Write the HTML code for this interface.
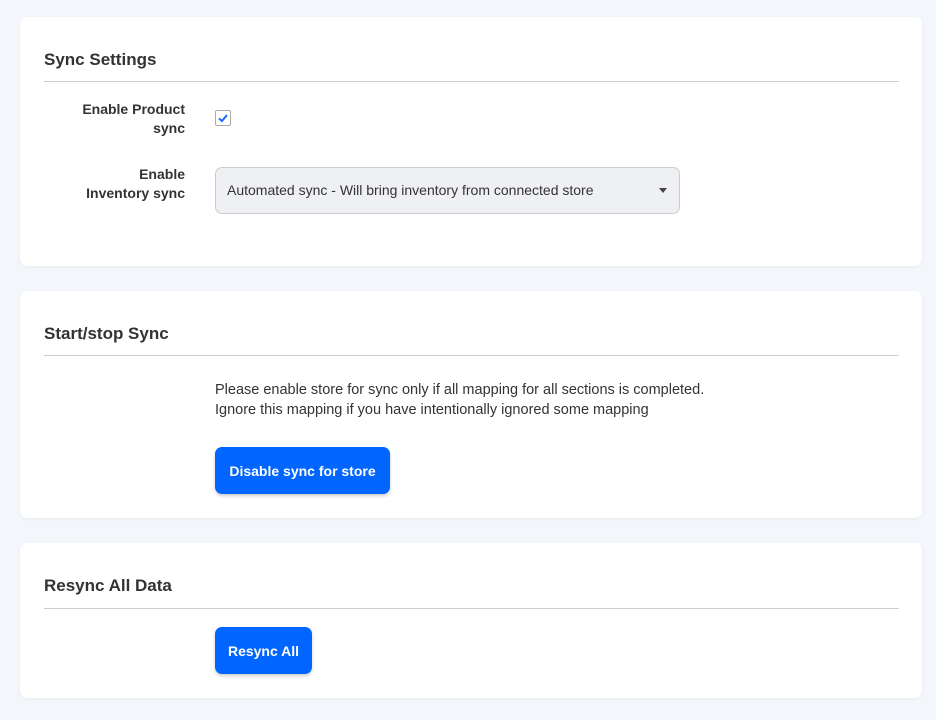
<!DOCTYPE html>
<html><head><style>
body{margin:0;background:#f3f6fa;font-family:"Liberation Sans",sans-serif;color:#333;width:936px;height:720px;overflow:hidden;position:relative}
.card{position:absolute;left:20px;width:902px;background:#fff;border-radius:7px;box-shadow:0 1px 3px rgba(0,0,0,.05)}
.t{position:absolute;left:24px;font-size:17px;font-weight:bold;color:#333}
.hr{position:absolute;left:24px;width:855px;height:1px;background:#d3cbc4}
.lbl{position:absolute;width:165px;left:0;text-align:right;font-size:14px;font-weight:bold;line-height:19px;color:#333}
.btn{position:absolute;left:195px;background:#0066ff;color:#fff;font-weight:bold;font-size:14px;border-radius:7px;display:flex;align-items:center;justify-content:center;box-shadow:0 2px 3px rgba(0,0,0,.2)}
</style></head><body>
<div class="card" style="top:17px;height:249px">
 <div class="t" style="top:33px">Sync Settings</div>
 <div class="hr" style="top:64px"></div>
 <div class="lbl" style="top:83px">Enable Product<br>sync</div>
 <div style="position:absolute;left:195px;top:93px;width:14px;height:14px;border:1px solid #aaa;border-radius:2px">
  <svg width="14" height="14" viewBox="0 0 14 14"><path d="M3 7.5L6 10L11 4" stroke="#1a66ff" stroke-width="2" fill="none"/></svg></div>
 <div class="lbl" style="top:148px">Enable<br>Inventory sync</div>
 <div style="position:absolute;left:195px;top:150px;width:463px;height:45px;background:#eff0f4;border:1px solid #ccc;border-radius:7px;font-size:14px;line-height:45px;padding-left:11px;box-sizing:border-box;width:465px;height:47px">Automated sync - Will bring inventory from connected store
  <span style="position:absolute;right:12px;top:20px;width:0;height:0;border-left:4px solid transparent;border-right:4px solid transparent;border-top:5px solid #444"></span></div>
</div>
<div class="card" style="top:291px;height:227px">
 <div class="t" style="top:33px">Start/stop Sync</div>
 <div class="hr" style="top:64px"></div>
 <div style="position:absolute;left:195px;top:89px;font-size:14.5px;line-height:20px">Please enable store for sync only if all mapping for all sections is completed.<br>Ignore this mapping if you have intentionally ignored some mapping</div>
 <div class="btn" style="top:156px;width:175px;height:47px">Disable sync for store</div>
</div>
<div class="card" style="top:543px;height:155px">
 <div class="t" style="top:33px">Resync All Data</div>
 <div class="hr" style="top:65px"></div>
 <div class="btn" style="top:84px;width:97px;height:47px">Resync All</div>
</div>
</body></html>
